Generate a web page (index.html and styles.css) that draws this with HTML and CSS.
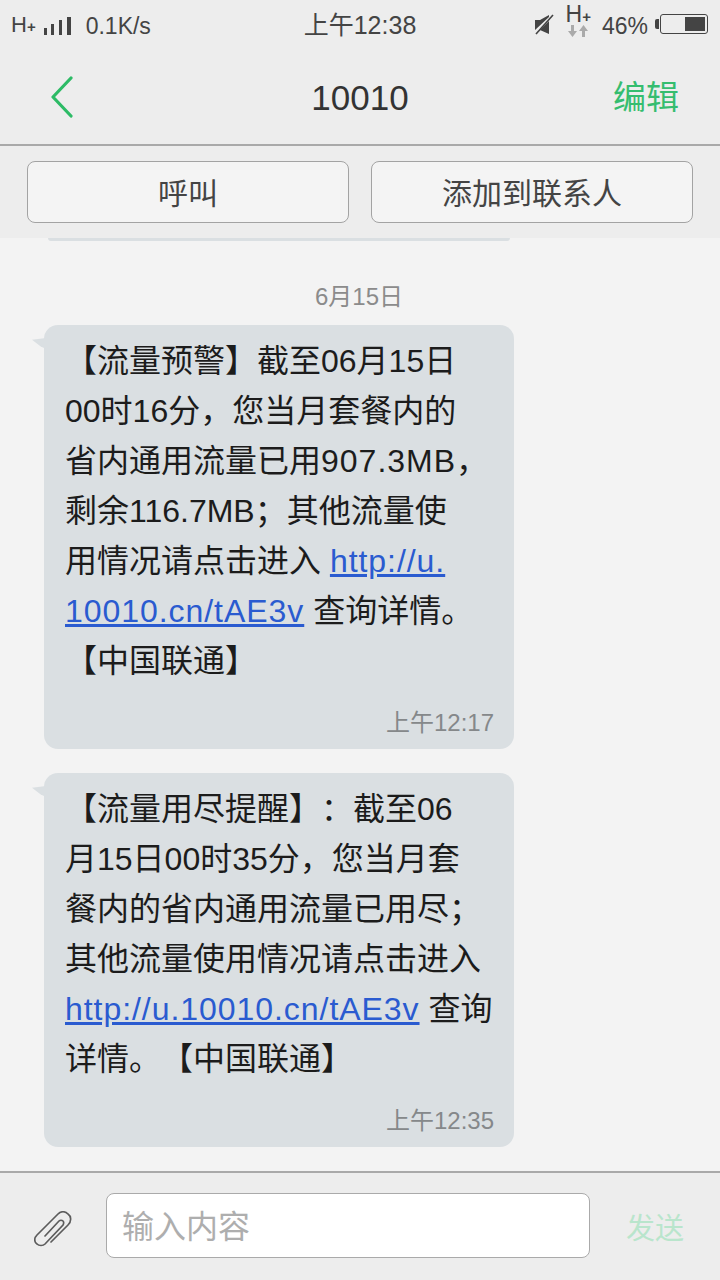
FILE: index.html
```html
<!DOCTYPE html>
<html lang="zh-CN">
<head>
    <meta charset="UTF-8">
    <meta name="viewport" content="width=device-width, initial-scale=1.0">
    <title>10010</title>
    <link rel="stylesheet" href="styles.css">
</head>
<body>
    <div class="phone">
        <div class="top-area">
            <div class="status-bar">
                <div class="status-left">
                    <span class="net-type">H<small>+</small></span>
                    <svg class="signal" width="27" height="18" viewBox="0 0 27 18">
                        <rect x="0" y="11" width="3" height="7"/>
                        <rect x="7" y="7" width="3" height="11"/>
                        <rect x="15" y="3" width="3" height="15"/>
                        <rect x="23" y="0" width="4" height="18"/>
                    </svg>
                    <span class="speed">0.1K/s</span>
                </div>
                <div class="status-time">上午12:38</div>
                <div class="status-right">
                    <svg class="mute" width="19" height="21" viewBox="0 0 19 21">
                        <path d="M0 6h5l9-5v2L0 16z" fill="#444"/>
                        <path d="M5 16l9-9v13z" fill="#444"/>
                        <path d="M1 20L18 1" stroke="#444" stroke-width="1.6"/>
                    </svg>
                    <div class="net-arrows">
                        <span class="net-type big">H<small>+</small></span>
                        <svg width="20" height="12" viewBox="0 0 20 12">
                            <path d="M3 0h3v6h3l-4.500 6L0 6h3z" fill="#aaa"/>
                            <path d="M14 12h3V6h3l-4.500-6L11 6h3z" fill="#aaa"/>
                        </svg>
                    </div>
                    <span class="battery-text">46%</span>
                    <div class="battery"><div class="battery-level"></div></div>
                </div>
            </div>

            <div class="nav-bar">
                <svg class="back-icon" width="22" height="42" viewBox="0 0 22 42">
                    <path d="M20 2L2 21l18 19" fill="none" stroke="#2dbb66" stroke-width="3.2" stroke-linecap="round" stroke-linejoin="round"/>
                </svg>
                <h1 class="nav-title">10010</h1>
                <span class="nav-edit">编辑</span>
            </div>

            <div class="actions">
                <button class="action-button">呼叫</button>
                <button class="action-button">添加到联系人</button>
            </div>
        </div>

        <div class="messages">
            <div class="prev-bubble"></div>
            <div class="date-label">6月15日</div>

            <div class="bubble">
                <p class="bubble-text">【流量预警】截至06月15日<br>00时16分，您当月套餐内的<br>省内通用流量已用<span class="wide">907.3MB</span>，<br>剩余116.7MB；其他流量使<br>用情况请点击进入 <a class="link">http://u.</a><br><a class="link">10010.cn/tAE3v</a> 查询详情。<br>【中国联通】</p>
                <div class="bubble-time">上午12:17</div>
            </div>

            <div class="bubble">
                <p class="bubble-text">【流量用尽提醒】：截至06<br>月15日00时35分，您当月套<br>餐内的省内通用流量已用尽；<br>其他流量使用情况请点击进入<br><a class="link">http://u.10010.cn/tAE3v</a> 查询<br>详情。【中国联通】</p>
                <div class="bubble-time">上午12:35</div>
            </div>
        </div>

        <div class="composer">
            <svg class="clip-icon" width="38" height="36" viewBox="0 0 38 36">
                <path d="M17 31L34 14C38 10 37 5 34 3C31 0 27 0 24 3L3 24C0 27 0 31 3 33C5 35 9 35 11 33L29 14C30 12 30 11 29 10C28 9 26 9 25 10L11 25" fill="none" stroke="#5c5c5c" stroke-width="1.7" stroke-linecap="round"/>
            </svg>
            <div class="input-box">输入内容</div>
            <span class="send">发送</span>
        </div>
    </div>
</body>
</html>
```

FILE: styles.css
```css
* {
    box-sizing: border-box;
}

body {
    margin: 0;
    padding: 0;
    background-color: #f3f3f3;
    font-family: "Liberation Sans", "Noto Sans CJK SC", sans-serif;
    text-spacing-trim: space-all;
}

.phone {
    display: flex;
    flex-direction: column;
    width: 720px;
    height: 1280px;
    overflow: hidden;
}

.top-area {
    background-color: #ededed;
}

/* Status bar */
.status-bar {
    position: relative;
    display: flex;
    justify-content: space-between;
    align-items: center;
    height: 50px;
    padding: 0 12px 0 11px;
    color: #444;
}

.status-left,
.status-right {
    display: flex;
    align-items: center;
}

.status-left {
    padding-top: 2px;
}

.net-type {
    font-size: 22px;
    line-height: 20px;
}

.net-type small {
    font-size: 15px;
    font-weight: bold;
}

.signal {
    margin-left: 8px;
    fill: #444;
}

.speed {
    margin-left: 15px;
    font-size: 23px;
}

.status-time {
    position: absolute;
    left: 0;
    right: 0;
    top: 8px;
    text-align: center;
    font-size: 25px;
    line-height: 34px;
}

.mute {
    margin-right: 12px;
    margin-top: -2px;
}

.net-arrows {
    display: flex;
    flex-direction: column;
    align-items: center;
    margin-right: 11px;
    margin-bottom: 8px;
}

.net-arrows .big {
    font-size: 23px;
    line-height: 16px;
}

.battery-text {
    font-size: 23px;
    margin-right: 12px;
    margin-top: 3px;
}

.battery {
    position: relative;
    display: flex;
    justify-content: flex-end;
    width: 48px;
    height: 20px;
    margin-top: -2px;
    padding: 2px;
    border: 1px solid #444;
    border-radius: 3px;
}

.battery::before {
    content: "";
    position: absolute;
    left: -6px;
    top: 4px;
    width: 4px;
    height: 10px;
    background-color: #444;
    border-radius: 2px 0 0 2px;
}

.battery-level {
    width: 20px;
    background-color: #444;
}

/* Nav bar */
.nav-bar {
    position: relative;
    display: flex;
    justify-content: space-between;
    align-items: center;
    height: 96px;
    padding: 0 41px 0 51px;
    border-bottom: 2px solid #a9a9a9;
}

.nav-title {
    position: absolute;
    left: 0;
    right: 0;
    margin: 2px 0 0;
    text-align: center;
    font-size: 35px;
    font-weight: normal;
    color: #333;
}

.nav-edit {
    margin-bottom: 4px;
    font-size: 33px;
    color: #35bd6f;
}

/* Call / add contact */
.actions {
    display: flex;
    gap: 22px;
    height: 92px;
    padding: 15px 27px 0;
}

.action-button {
    flex: 1;
    height: 62px;
    padding: 0 0 2px;
    background-color: #f4f4f4;
    border: 1px solid #a3a3a3;
    border-radius: 8px;
    font-family: inherit;
    font-size: 30px;
    color: #444;
}

/* Message list */
.messages {
    flex: 1;
    padding: 0 0 0 44px;
    background-color: #f3f3f3;
}

.prev-bubble {
    width: 462px;
    height: 3px;
    margin-left: 4px;
    background-color: #dadfe2;
    border-radius: 0 0 14px 14px;
}

.date-label {
    width: 630px;
    margin-top: 41px;
    text-align: center;
    font-size: 24px;
    line-height: 30px;
    color: #8b8b8b;
}

.bubble {
    position: relative;
    width: 470px;
    margin-top: 13px;
    margin-bottom: 24px;
    padding: 11px 20px 9px 21px;
    background-color: #dadfe2;
    border-radius: 14px;
}

.bubble::before {
    content: "";
    position: absolute;
    left: -12px;
    top: 13px;
    width: 14px;
    height: 11px;
    background-color: #dadfe2;
    clip-path: polygon(0 15%, 100% 0, 100% 100%, 60% 75%);
}

.bubble + .bubble {
    margin-top: 0;
}

.bubble-text {
    margin: 0;
    font-size: 32px;
    line-height: 50px;
    color: #1c1c1c;
    white-space: nowrap;
}

.wide {
    letter-spacing: 1px;
}

.link {
    color: #2a5bd0;
    letter-spacing: 0.95px;
    text-decoration: underline;
}

.bubble-time {
    margin-top: 20px;
    text-align: right;
    font-size: 24px;
    line-height: 34px;
    color: #85888a;
}

/* Composer */
.composer {
    display: flex;
    align-items: center;
    height: 109px;
    padding: 0 36px 2px 34px;
    background-color: #ededed;
    border-top: 2px solid #a9a9a9;
}

.clip-icon {
    flex: none;
    margin-top: 6px;
}

.input-box {
    flex: none;
    width: 484px;
    height: 65px;
    margin-left: 34px;
    padding-left: 15px;
    background-color: #fff;
    border: 1px solid #aaa;
    border-radius: 8px;
    font-size: 32px;
    line-height: 67px;
    color: #aeaeae;
}

.send {
    margin-left: auto;
    font-size: 29px;
    color: #b9e5cc;
}
```
